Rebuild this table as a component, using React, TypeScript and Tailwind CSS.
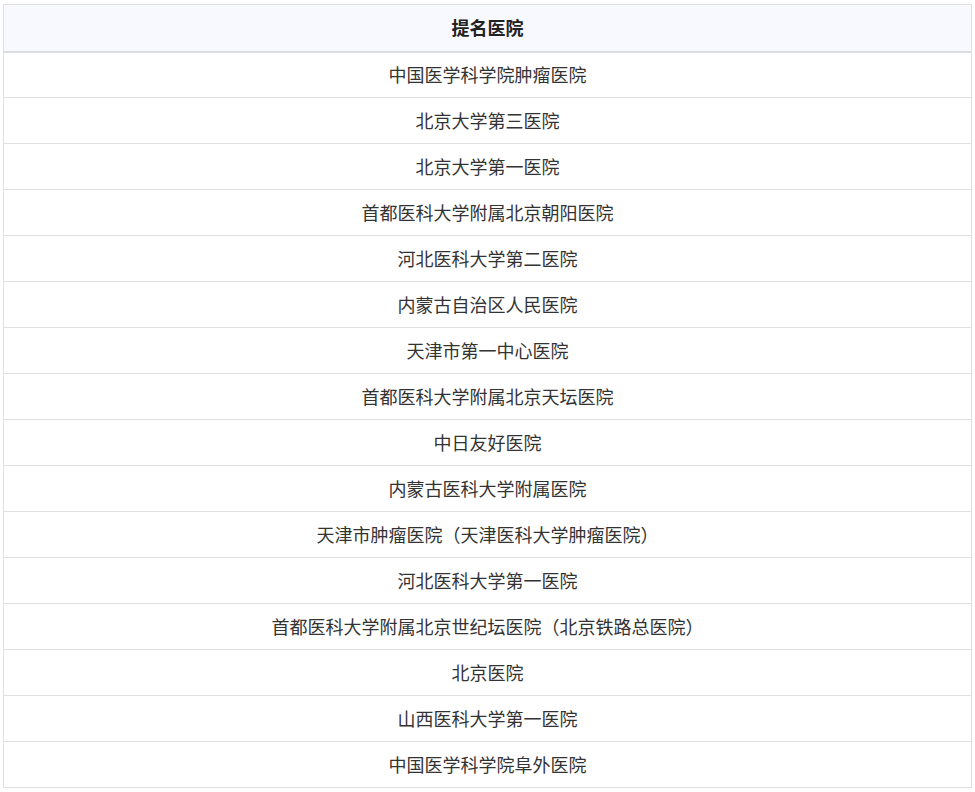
import React from "react";

const hospitals = [
  "中国医学科学院肿瘤医院",
  "北京大学第三医院",
  "北京大学第一医院",
  "首都医科大学附属北京朝阳医院",
  "河北医科大学第二医院",
  "内蒙古自治区人民医院",
  "天津市第一中心医院",
  "首都医科大学附属北京天坛医院",
  "中日友好医院",
  "内蒙古医科大学附属医院",
  "天津市肿瘤医院（天津医科大学肿瘤医院）",
  "河北医科大学第一医院",
  "首都医科大学附属北京世纪坛医院（北京铁路总医院）",
  "北京医院",
  "山西医科大学第一医院",
  "中国医学科学院阜外医院",
];

const font = { fontFamily: '"Noto Sans CJK SC", "Noto Sans", sans-serif' };

export default function App() {
  return (
    <div className="pt-[4px] pl-[3px] bg-white min-h-screen" style={font}>
      <table className="w-[969px] border-collapse border border-[#e0e0e0] text-[18px] text-[#333]">
        <thead>
          <tr className="bg-[#f8f9fe] border-b-2 border-[#dcdde3]">
            <th className="h-[47px] p-0 font-bold text-[#222] text-center">提名医院</th>
          </tr>
        </thead>
        <tbody>
          {hospitals.map((h, i) => (
            <tr key={i} className="border-b border-[#e0e0e0]">
              <td className="h-[46px] p-0 text-center">{h}</td>
            </tr>
          ))}
        </tbody>
      </table>
    </div>
  );
}
